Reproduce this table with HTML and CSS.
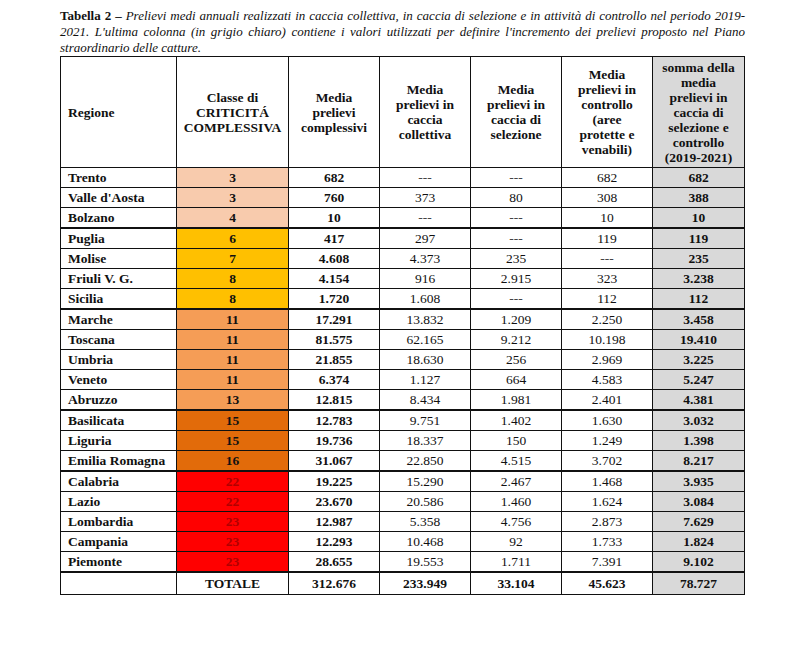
FILE: index.html
```html
<!DOCTYPE html>
<html lang="it">
<head>
<meta charset="utf-8">
<title>Tabella 2</title>
<link rel="stylesheet" href="styles.css">
</head>
<body>
<div class="page">
  <div class="caption">
    <div class="line just"><b>Tabella 2 –</b> <i>Prelievi medi annuali realizzati in caccia collettiva, in caccia di selezione e in attività di controllo nel periodo 2019-</i></div>
    <div class="line just"><i>2021. L'ultima colonna (in grigio chiaro) contiene i valori utilizzati per definire l'incremento dei prelievi proposto nel Piano</i></div>
    <div class="line"><i>straordinario delle catture.</i></div>
  </div>
  <table class="tab">
    <colgroup>
      <col class="c1"><col class="c2"><col class="c3"><col class="c4"><col class="c5"><col class="c6"><col class="c7">
    </colgroup>
    <thead>
      <tr class="head">
        <th class="left">Regione</th>
        <th>Classe di<br>CRITICITÁ<br>COMPLESSIVA</th>
        <th>Media<br>prelievi<br>complessivi</th>
        <th>Media<br>prelievi in<br>caccia<br>collettiva</th>
        <th>Media<br>prelievi in<br>caccia di<br>selezione</th>
        <th>Media<br>prelievi in<br>controllo<br>(aree<br>protette e<br>venabili)</th>
        <th class="grey">somma della<br>media<br>prelievi in<br>caccia di<br>selezione e<br>controllo<br>(2019-2021)</th>
      </tr>
    </thead>
    <tbody>
      <tr><td class="reg">Trento</td><td class="k k1">3</td><td class="b">682</td><td class="d">---</td><td class="d">---</td><td>682</td><td class="grey b">682</td></tr>
      <tr><td class="reg">Valle d'Aosta</td><td class="k k1">3</td><td class="b">760</td><td>373</td><td>80</td><td>308</td><td class="grey b">388</td></tr>
      <tr><td class="reg">Bolzano</td><td class="k k1">4</td><td class="b">10</td><td class="d">---</td><td class="d">---</td><td>10</td><td class="grey b">10</td></tr>

      <tr class="g"><td class="reg">Puglia</td><td class="k k2">6</td><td class="b">417</td><td>297</td><td class="d">---</td><td>119</td><td class="grey b">119</td></tr>
      <tr><td class="reg">Molise</td><td class="k k2">7</td><td class="b">4.608</td><td>4.373</td><td>235</td><td class="d">---</td><td class="grey b">235</td></tr>
      <tr><td class="reg">Friuli V. G.</td><td class="k k2">8</td><td class="b">4.154</td><td>916</td><td>2.915</td><td>323</td><td class="grey b">3.238</td></tr>
      <tr><td class="reg">Sicilia</td><td class="k k2">8</td><td class="b">1.720</td><td>1.608</td><td class="d">---</td><td>112</td><td class="grey b">112</td></tr>

      <tr class="g"><td class="reg">Marche</td><td class="k k3">11</td><td class="b">17.291</td><td>13.832</td><td>1.209</td><td>2.250</td><td class="grey b">3.458</td></tr>
      <tr><td class="reg">Toscana</td><td class="k k3">11</td><td class="b">81.575</td><td>62.165</td><td>9.212</td><td>10.198</td><td class="grey b">19.410</td></tr>
      <tr><td class="reg">Umbria</td><td class="k k3">11</td><td class="b">21.855</td><td>18.630</td><td>256</td><td>2.969</td><td class="grey b">3.225</td></tr>
      <tr><td class="reg">Veneto</td><td class="k k3">11</td><td class="b">6.374</td><td>1.127</td><td>664</td><td>4.583</td><td class="grey b">5.247</td></tr>
      <tr><td class="reg">Abruzzo</td><td class="k k3">13</td><td class="b">12.815</td><td>8.434</td><td>1.981</td><td>2.401</td><td class="grey b">4.381</td></tr>

      <tr class="g"><td class="reg">Basilicata</td><td class="k k4">15</td><td class="b">12.783</td><td>9.751</td><td>1.402</td><td>1.630</td><td class="grey b">3.032</td></tr>
      <tr><td class="reg">Liguria</td><td class="k k4">15</td><td class="b">19.736</td><td>18.337</td><td>150</td><td>1.249</td><td class="grey b">1.398</td></tr>
      <tr><td class="reg">Emilia Romagna</td><td class="k k4">16</td><td class="b">31.067</td><td>22.850</td><td>4.515</td><td>3.702</td><td class="grey b">8.217</td></tr>

      <tr class="g"><td class="reg">Calabria</td><td class="k k5">22</td><td class="b">19.225</td><td>15.290</td><td>2.467</td><td>1.468</td><td class="grey b">3.935</td></tr>
      <tr><td class="reg">Lazio</td><td class="k k5">22</td><td class="b">23.670</td><td>20.586</td><td>1.460</td><td>1.624</td><td class="grey b">3.084</td></tr>
      <tr><td class="reg">Lombardia</td><td class="k k5">23</td><td class="b">12.987</td><td>5.358</td><td>4.756</td><td>2.873</td><td class="grey b">7.629</td></tr>
      <tr><td class="reg">Campania</td><td class="k k5">23</td><td class="b">12.293</td><td>10.468</td><td>92</td><td>1.733</td><td class="grey b">1.824</td></tr>
      <tr><td class="reg">Piemonte</td><td class="k k5">23</td><td class="b">28.655</td><td>19.553</td><td>1.711</td><td>7.391</td><td class="grey b">9.102</td></tr>

      <tr class="g tot"><td></td><td class="b">TOTALE</td><td class="b">312.676</td><td class="b">233.949</td><td class="b">33.104</td><td class="b">45.623</td><td class="grey b">78.727</td></tr>
    </tbody>
  </table>
</div>
</body>
</html>
```
FILE: styles.css
```css
html, body {
  margin: 0;
  padding: 0;
  background: #fff;
}
body {
  font-family: "Liberation Serif", "Times New Roman", serif;
  color: #111;
}
.page {
  padding: 8px 0 0 60px;
  width: 685px;
}
.caption {
  font-size: 13px;
  line-height: 16px;
}
.caption .line {
  white-space: nowrap;
}
.caption .just {
  text-align: justify;
  text-align-last: justify;
  white-space: normal;
}
.tab {
  border-collapse: collapse;
  table-layout: fixed;
  width: 685px;
  font-size: 13.5px;
}
.c1 { width: 116px; }
.c2 { width: 112px; }
.c3 { width: 91px; }
.c4 { width: 91px; }
.c5 { width: 91px; }
.c6 { width: 91px; }
.c7 { width: 92px; }
.tab th, .tab td {
  border: 1px solid #111;
  padding: 0;
  text-align: center;
  vertical-align: middle;
}
.tab th {
  font-weight: bold;
  line-height: 15px;
  height: 110px;
}
.tab th.left {
  text-align: left;
  padding-left: 7px;
}
.tab td {
  height: 19px;
  line-height: 15px;
}
.tab tr.g td {
  border-top: 2px solid #111;
}
.tab tr.tot td {
  height: 21px;
}
.tab td.reg {
  text-align: left;
  padding-left: 7px;
  font-weight: bold;
}
.b { font-weight: bold; }
.d { color: #444; }
.grey { background: #d9d9d9; }
.k { font-weight: bold; }
.k1 { background: #f8cbad; }
.k2 { background: #ffc000; }
.k3 { background: #f59d56; }
.k4 { background: #e26b0a; }
.k5 { background: #ff0000; color: #b00000; }
```
